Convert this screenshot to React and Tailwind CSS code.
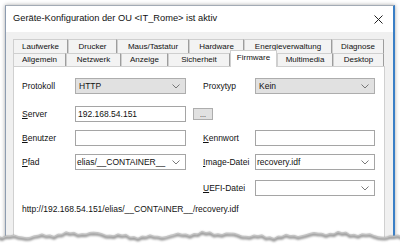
import React from 'react';

const Chevron = () => (
  <svg width="8" height="5" viewBox="0 0 8 5" className="shrink-0">
    <polyline points="0.5,0.5 4,4 7.5,0.5" fill="none" stroke="#6a6a6a" strokeWidth="0.9" />
  </svg>
);

const Label = ({ u, rest, w }) => (
  <div className={`${w} shrink-0`}>
    {u ? <span className="underline underline-offset-1">{u}</span> : null}
    {rest}
  </div>
);

const DropList = ({ value, w }) => (
  <div className={`${w} h-[16px] border border-[#adadad] bg-[#e1e1e1] flex items-center justify-between pl-[3px] pr-[5px]`}>
    <span>{value}</span>
    <Chevron />
  </div>
);

const Combo = ({ value, w }) => (
  <div className={`${w} h-[16px] border border-[#a5a5a5] bg-white flex items-center justify-between pl-[1px] pr-[5px]`}>
    <span>{value}</span>
    <Chevron />
  </div>
);

const Input = ({ value, w }) => (
  <div className={`${w} h-[16px] border border-[#a5a5a5] bg-white flex items-center pl-[2px]`}>{value}</div>
);

const row1 = [
  ['Laufwerke', 'w-[55px]'],
  ['Drucker', 'w-[49px]'],
  ['Maus/Tastatur', 'w-[72px]'],
  ['Hardware', 'w-[55px]'],
  ['Energieverwaltung', 'w-[88px]'],
  ['Diagnose', 'w-[52px]'],
];

const row2 = [
  ['Allgemein', 'w-[53px]'],
  ['Netzwerk', 'w-[55px]'],
  ['Anzeige', 'w-[47px]'],
  ['Sicherheit', 'w-[62px]'],
  ['Firmware', 'w-[47px]'],
  ['Multimedia', 'w-[56px]'],
  ['Desktop', 'w-[51px]'],
];

// jagged tear line along the bottom
const tear = [];
for (let x = -2; x <= 402; x += 4) {
  const y =
    14.8 +
    1.8 * Math.sin(x * 0.05 + 0.6) +
    1.2 * Math.sin(x * 0.23 + 1.7) +
    0.8 * Math.sin(x * 0.83 + 0.4);
  tear.push([x, Math.round(y * 10) / 10]);
}
const tearLine = tear.map(([x, y]) => `${x},${y}`).join(' ');

export default function App() {
  return (
    <div className="relative w-[400px] h-[248px] overflow-hidden bg-white font-['Liberation_Sans',Arial,sans-serif] text-[8.5px] text-[#111] leading-none">
      {/* window */}
      <div className="ml-[5px] mt-[5px] w-[390px] h-[260px] flex flex-col border-l border-t border-l-[#8d9cb0] border-t-[#a3abb5] border-r-2 border-r-[#3a7fc6] shadow-[0_0_4px_rgba(0,0,0,0.35)]">
        {/* title bar */}
        <div className="h-[26px] shrink-0 bg-white flex items-center justify-between pl-[7px] pr-[10px]">
          <span className="text-[9.3px] text-[#111]">Geräte-Konfiguration der OU &lt;IT_Rome&gt; ist aktiv</span>
          <svg width="9" height="9" viewBox="0 0 9 9">
            <path d="M0.5 0.5 L8.5 8.5 M8.5 0.5 L0.5 8.5" stroke="#222" strokeWidth="1" />
          </svg>
        </div>

        {/* body */}
        <div className="flex-1 bg-[#f0f0f0] pt-[7px] pl-[7px]">
          {/* tabs */}
          <div className="flex h-[14px] text-[8px]">
            {row1.map(([t, w]) => (
              <div key={t} className={`${w} h-[14px] border-t border-l border-[#cfcfcf] border-r border-r-[#9d9d9d] bg-[#f3f3f3] flex items-center justify-center`}>
                {t}
              </div>
            ))}
          </div>
          <div className="flex items-end h-[13px] text-[8px]">
            {row2.map(([t, w]) => {
              const sel = t === 'Firmware';
              return (
                <div
                  key={t}
                  className={
                    sel
                      ? `${w} h-[17px] -mb-[1px] relative z-10 bg-white border-t border-l border-r border-[#cfcfcf] flex items-start pt-[3px] justify-center`
                      : `${w} h-[13px] border-t border-l border-[#cfcfcf] border-r border-r-[#9d9d9d] bg-[#f3f3f3] flex items-center justify-center`
                  }
                >
                  {t}
                </div>
              );
            })}
          </div>

          {/* tab page */}
          <div className="w-[372px] h-[200px] bg-white border border-[#d0d0d0] pl-[8px]">
            <div className="flex items-center mt-[11px] h-[16px]">
              <Label rest="Protokoll" w="w-[53px]" />
              <DropList value="HTTP" w="w-[111px]" />
              <div className="w-[17px]" />
              <Label rest="Proxytyp" w="w-[52px]" />
              <DropList value="Kein" w="w-[120px]" />
            </div>

            <div className="flex items-center mt-[12px] h-[16px]">
              <Label u="S" rest="erver" w="w-[53px]" />
              <Input value="192.168.54.151" w="w-[111px]" />
              <div className="ml-[7px] w-[20px] h-[12px] border border-[#adadad] bg-[#e1e1e1] flex items-center justify-center text-[7px]">...</div>
            </div>

            <div className="flex items-center mt-[8px] h-[16px]">
              <Label u="B" rest="enutzer" w="w-[53px]" />
              <Input value="" w="w-[111px]" />
              <div className="w-[17px]" />
              <Label u="K" rest="ennwort" w="w-[52px]" />
              <Input value="" w="w-[120px]" />
            </div>

            <div className="flex items-center mt-[8px] h-[16px]">
              <Label u="P" rest="fad" w="w-[53px]" />
              <Combo value="elias/__CONTAINER__" w="w-[111px]" />
              <div className="w-[17px]" />
              <Label u="I" rest="mage-Datei" w="w-[52px]" />
              <Combo value="recovery.idf" w="w-[120px]" />
            </div>

            <div className="flex items-center mt-[10px] h-[16px]">
              <div className="w-[181px]" />
              <Label u="U" rest="EFI-Datei" w="w-[52px]" />
              <Combo value="" w="w-[120px]" />
            </div>

            <div className="mt-[7px] h-[12px] flex items-center">
              http://192.168.54.151/elias/__CONTAINER__/recovery.idf
            </div>
          </div>
        </div>
      </div>

      {/* torn bottom edge */}
      <svg className="absolute left-0 top-[220px]" width="400" height="28" viewBox="0 0 400 28">
        <defs>
          <filter id="tearblur" x="-5%" y="-50%" width="110%" height="200%">
            <feGaussianBlur stdDeviation="1.2" />
          </filter>
        </defs>
        <polygon points={`${tearLine} 402,28 -2,28`} fill="#ffffff" />
        <polyline
          points={tearLine}
          fill="none"
          stroke="#8a8a8a"
          strokeWidth="2.5"
          filter="url(#tearblur)"
          transform="translate(0,1.8)"
        />
        <polyline points={tearLine} fill="none" stroke="#b5b5b5" strokeWidth="0.6" />
      </svg>
    </div>
  );
}
